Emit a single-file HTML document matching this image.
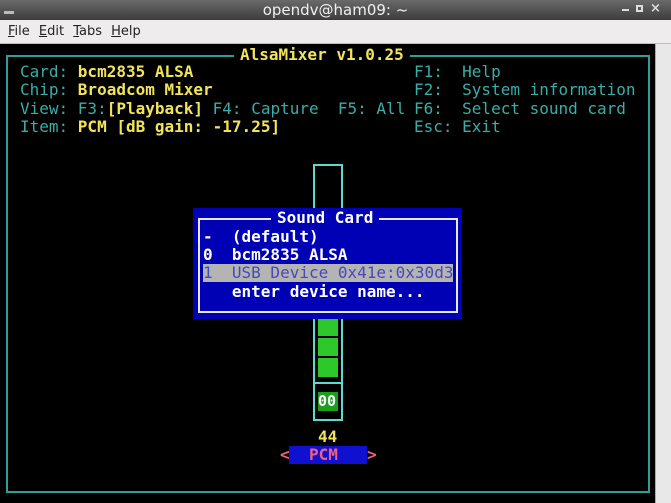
<!DOCTYPE html>
<html><head><meta charset="utf-8"><style>
*{margin:0;padding:0;box-sizing:border-box}
html,body{width:671px;height:503px;overflow:hidden;background:#000;font-family:"DejaVu Sans Mono",monospace}
.a{position:absolute}
.t{position:absolute;font-size:16px;line-height:18px;white-space:pre;font-family:"DejaVu Sans Mono","Liberation Mono",monospace}
.c{color:#3aaea6}.y{color:#f2e45a;font-weight:bold}.w{color:#fff;font-weight:bold}
</style></head><body>
<div class="a" style="left:0;top:0;width:671px;height:20px;background:linear-gradient(#6a6a6a,#3c3c3c);"></div>
<div class="a" style="left:4px;top:4px;width:10px;height:10px;border-bottom:3px solid #bbb"></div>
<div class="a" style="left:0;top:1px;width:671px;text-align:center;color:#f0f0f0;font:15px 'DejaVu Sans',sans-serif">opendv@ham09: ~</div>
<div class="a" style="left:622px;top:9px;width:7px;height:2px;background:#ddd"></div>
<div class="a" style="left:636px;top:5px;width:7px;height:7px;border:2px solid #ddd"></div>
<div class="a" style="left:650px;top:1px;color:#ddd;font:bold 13px 'DejaVu Sans',sans-serif">×</div>
<div class="a" style="left:0;top:20px;width:671px;height:24px;background:#eeeced;border-bottom:1px solid #bbb"></div>
<div class="a" style="left:8px;top:24px;color:#222;font:13px 'DejaVu Sans',sans-serif;word-spacing:5px"><u>F</u>ile <u>E</u>dit <u>T</u>abs <u>H</u>elp</div>
<div class="a" style="left:655px;top:44px;width:16px;height:459px;background:#e8e8e8;border-left:1px solid #aaa"></div>
<div class="a" style="left:6px;top:55px;width:644px;height:438px;border:2px solid #2e9e98"></div>
<div class="t y" style="left:234px;top:46px;background:#000;padding:0 6px">AlsaMixer v1.0.25</div>
<div class="t" style="left:20px;top:63px"><span class="c">Card: </span><span class="y">bcm2835 ALSA</span></div>
<div class="t" style="left:20px;top:81px"><span class="c">Chip: </span><span class="y">Broadcom Mixer</span></div>
<div class="t" style="left:20px;top:100px"><span class="c">View: F3:</span><span class="y">[Playback]</span><span class="c"> F4: Capture  F5: All</span></div>
<div class="t" style="left:20px;top:118px"><span class="c">Item: </span><span class="y">PCM [dB gain: -17.25]</span></div>
<div class="t c" style="left:414px;top:63px">F1:  Help</div>
<div class="t c" style="left:414px;top:81px">F2:  System information</div>
<div class="t c" style="left:414px;top:100px">F6:  Select sound card</div>
<div class="t c" style="left:414px;top:118px">Esc: Exit</div>
<div class="a" style="left:313px;top:164px;width:30px;height:257px;border:2px solid #5fd8d0"></div>
<div class="a" style="left:313px;top:382px;width:30px;height:2px;background:#5fd8d0"></div>
<div class="a" style="left:318px;top:318px;width:20px;height:18px;background:#2cc82c"></div>
<div class="a" style="left:318px;top:338px;width:20px;height:18px;background:#2cc82c"></div>
<div class="a" style="left:318px;top:358px;width:20px;height:19px;background:#2cc82c"></div>
<div class="a" style="left:318px;top:392px;width:20px;height:19px;background:#1aa01a"></div>
<div class="t w" style="left:318px;top:392px;font-size:15px">00</div>
<div class="t y" style="left:318px;top:428px">44</div>
<div class="a" style="left:289px;top:446px;width:78px;height:18px;background:#1010d0"></div>
<div class="t" style="left:280px;top:446px;color:#f06080;font-weight:bold">&lt;</div>
<div class="t" style="left:309px;top:446px;color:#f06080;font-weight:bold">PCM</div>
<div class="t" style="left:367px;top:446px;color:#f06080;font-weight:bold">&gt;</div>
<div class="a" style="left:193px;top:208px;width:269px;height:111px;background:#0000b4"></div>
<div class="a" style="left:198px;top:218px;width:260px;height:95px;border:2px solid #e8e8f0"></div>
<div class="t w" style="left:271px;top:209px;background:#0000b4;padding:0 6px">Sound Card</div>
<div class="t w" style="left:203px;top:228px">-  (default)</div>
<div class="t w" style="left:203px;top:246px">0  bcm2835 ALSA</div>
<div class="a" style="left:203px;top:264px;width:250px;height:18px;background:#b4b4b4"></div>
<div class="t" style="left:203px;top:264px;color:#4848b8">1  USB Device 0x41e:0x30d3</div>
<div class="t w" style="left:203px;top:283px">   enter device name...</div>
</body></html>
